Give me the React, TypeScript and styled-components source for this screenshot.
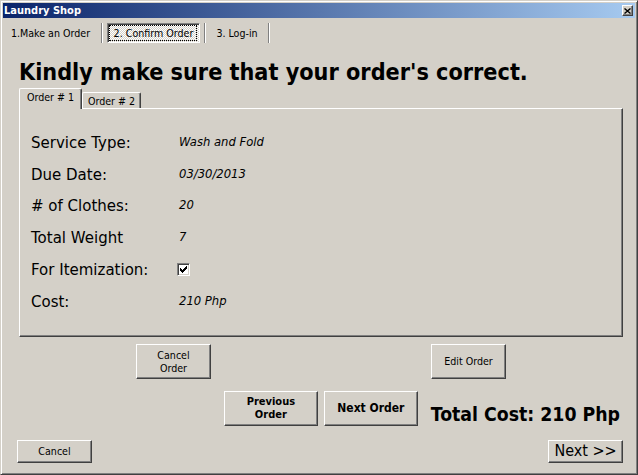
import React from "react";
import styled, { createGlobalStyle, css } from "styled-components";

const GlobalStyle = createGlobalStyle`
  html, body { margin: 0; padding: 0; background: #d4d0c8; }
  body { font-family: "DejaVu Sans Condensed", "DejaVu Sans", sans-serif; }
`;

const raised = css`
  border: 1px solid;
  border-color: #ffffff #404040 #404040 #ffffff;
  box-shadow: inset -1px -1px #808080;
`;

const Window = styled.div`
  width: 638px;
  height: 475px;
  box-sizing: border-box;
  border: 1px solid;
  border-color: #d4d0c8 #404040 #404040 #d4d0c8;
  box-shadow: inset 1px 1px #ffffff, inset -1px -1px #808080;
  padding: 2px;
  background: #d4d0c8;
  display: flex;
  flex-direction: column;
  font-family: "DejaVu Sans Condensed", "DejaVu Sans", sans-serif;
  color: #000;
`;

const TitleBar = styled.div`
  height: 15px;
  flex: none;
  display: flex;
  align-items: flex-start;
  justify-content: space-between;
  padding: 0 2px 0 1px;
  background: linear-gradient(to right, #0a246a, #a6caf0);
`;

const TitleText = styled.span`
  color: #ffffff;
  font-weight: bold;
  font-size: 11px;
  line-height: 14px;
  padding-top: 1px;
`;

const CloseButton = styled.div`
  ${raised};
  align-self: center;
  box-sizing: border-box;
  width: 11px;
  height: 11px;
  background: #d4d0c8;
  display: flex;
  align-items: center;
  justify-content: center;
`;

const TabStrip = styled.div`
  display: flex;
  gap: 4px;
  height: 20px;
  margin-top: 5px;
  padding-left: 1px;
`;

const StripTab = styled.div<{ $w: number; $pressed?: boolean }>`
  box-sizing: border-box;
  width: ${(p) => p.$w}px;
  font-size: 10.6px;
  display: flex;
  align-items: center;
  justify-content: center;
  ${(p) =>
    p.$pressed &&
    css`
      border: 1px solid;
      border-color: #808080 #ffffff #ffffff #808080;
      box-shadow: inset 1px 1px #404040;
      padding: 1px 2px 1px 1px;
      background-color: #ffffff;
      background-image: conic-gradient(
        #d4d0c8 25%,
        transparent 0 50%,
        #d4d0c8 0 75%,
        transparent 0
      );
      background-size: 2px 2px;
    `}
`;

const FocusRing = styled.span`
  flex: 1;
  align-self: stretch;
  display: flex;
  align-items: center;
  justify-content: center;
  border: 1px dotted #000;
  padding-left: 1px;
`;

const StripSep = styled.div`
  width: 2px;
  box-sizing: border-box;
  border-left: 1px solid #808080;
  border-right: 1px solid #ffffff;
`;

const Body = styled.div`
  display: flex;
  flex-direction: column;
  padding: 0 12px 0 16px;
`;

const Heading = styled.h1`
  margin: 15px 0 0 0;
  font-size: 23.2px;
  line-height: 27px;
  font-weight: bold;
  white-space: nowrap;
`;

const OrderTabs = styled.div`
  display: flex;
  align-items: flex-end;
  height: 20px;
  margin-top: 3px;
`;

const OrderTab = styled.div<{ $w: number; $active?: boolean }>`
  box-sizing: border-box;
  width: ${(p) => p.$w}px;
  height: ${(p) => (p.$active ? 21 : 16)}px;
  margin-bottom: ${(p) => (p.$active ? -1 : 0)}px;
  position: relative;
  z-index: ${(p) => (p.$active ? 1 : 0)};
  background: #d4d0c8;
  border-left: 1px solid #ffffff;
  border-top: 1px solid #ffffff;
  border-right: 1px solid #404040;
  box-shadow: inset -1px 0 #808080;
  border-top-left-radius: 2px;
  border-top-right-radius: 2px;
  font-size: 10.6px;
  line-height: 13px;
  padding-top: 2px;
  text-align: center;
`;

const Panel = styled.div`
  ${raised};
  box-sizing: border-box;
  height: 229px;
  padding: 18px 11px;
`;

const Row = styled.div`
  display: grid;
  grid-template-columns: 148px 1fr;
  align-items: center;
  height: 31.75px;
`;

const Label = styled.span`
  font-family: "DejaVu Sans", sans-serif;
  font-size: 15px;
`;

const Value = styled.span`
  font-family: "DejaVu Sans", sans-serif;
  font-style: italic;
  font-size: 11.6px;
  margin-bottom: 2px;
`;

const CheckBox = styled.span`
  box-sizing: border-box;
  width: 13px;
  height: 13px;
  margin-left: -2px;
  background: #ffffff;
  border: 1px solid;
  border-color: #808080 #ffffff #ffffff #808080;
  box-shadow: inset 1px 1px #404040, inset -1px -1px #d4d0c8;
  display: flex;
  align-items: center;
  justify-content: center;
`;

const ActionRow = styled.div`
  display: flex;
  justify-content: center;
  gap: 220px;
  margin-top: 7px;
`;

const NavRow = styled.div`
  display: flex;
  align-items: flex-end;
  justify-content: flex-end;
  gap: 6px;
  margin-top: 12px;
  margin-right: 3px;
`;

const Button = styled.button<{ $w: number; $h: number; $size?: number; $bold?: boolean }>`
  ${raised};
  box-sizing: border-box;
  width: ${(p) => p.$w}px;
  height: ${(p) => p.$h}px;
  padding: 0;
  background: #d4d0c8;
  color: #000;
  font-family: "DejaVu Sans Condensed", "DejaVu Sans", sans-serif;
  font-size: ${(p) => p.$size ?? 10.6}px;
  font-weight: ${(p) => (p.$bold ? "bold" : "normal")};
  line-height: 12.7px;
  text-align: center;
  display: flex;
  align-items: center;
  justify-content: center;
`;

const TotalCost = styled.span`
  margin-left: 7px;
  font-size: 19.3px;
  font-weight: bold;
  white-space: nowrap;
`;

const Footer = styled.div`
  display: flex;
  justify-content: space-between;
  margin-top: 14px;
  padding: 0 12px 0 14px;
`;

function CheckMark() {
  const cols = [2, 3, 4, 3, 2, 1, 0];
  return (
    <svg width="7" height="7" viewBox="0 0 7 7" shapeRendering="crispEdges">
      {cols.map((y, x) => (
        <rect key={x} x={x} y={y} width="1" height="3" fill="#000" />
      ))}
    </svg>
  );
}

const rows: [string, string | null][] = [
  ["Service Type:", "Wash and Fold"],
  ["Due Date:", "03/30/2013"],
  ["# of Clothes:", "20"],
  ["Total Weight", "7"],
  ["For Itemization:", null],
  ["Cost:", "210 Php"],
];

export default function App() {
  return (
    <>
      <GlobalStyle />
      <Window>
        <TitleBar>
          <TitleText>Laundry Shop</TitleText>
          <CloseButton>
            <svg width="7" height="6" viewBox="0 0 7 6">
              <path d="M0.5 0.5 L6.5 5.5 M6.5 0.5 L0.5 5.5" stroke="#000" strokeWidth="1.4" fill="none" />
            </svg>
          </CloseButton>
        </TitleBar>

        <TabStrip>
          <StripTab $w={93}>1.Make an Order</StripTab>
          <StripSep />
          <StripTab $w={93} $pressed>
            <FocusRing>2. Confirm Order</FocusRing>
          </StripTab>
          <StripSep />
          <StripTab $w={54}>3. Log-in</StripTab>
          <StripSep />
        </TabStrip>

        <Body>
          <Heading>Kindly make sure that your order's correct.</Heading>
          <OrderTabs>
            <OrderTab $w={63} $active>
              Order # 1
            </OrderTab>
            <OrderTab $w={59}>Order # 2</OrderTab>
          </OrderTabs>
          <Panel>
            {rows.map(([label, value]) => (
              <Row key={label}>
                <Label>{label}</Label>
                {value === null ? (
                  <CheckBox>
                    <CheckMark />
                  </CheckBox>
                ) : (
                  <Value>{value}</Value>
                )}
              </Row>
            ))}
          </Panel>

          <ActionRow>
            <Button $w={75} $h={35}>
              Cancel
              <br />
              Order
            </Button>
            <Button $w={75} $h={35}>
              Edit Order
            </Button>
          </ActionRow>

          <NavRow>
            <Button $w={94} $h={35} $size={11} $bold>
              Previous
              <br />
              Order
            </Button>
            <Button $w={94} $h={35} $size={12} $bold>
              Next Order
            </Button>
            <TotalCost>Total Cost: 210 Php</TotalCost>
          </NavRow>
        </Body>

        <Footer>
          <Button $w={75} $h={23}>
            Cancel
          </Button>
          <Button $w={75} $h={23} $size={16}>
            Next &gt;&gt;
          </Button>
        </Footer>
      </Window>
    </>
  );
}
